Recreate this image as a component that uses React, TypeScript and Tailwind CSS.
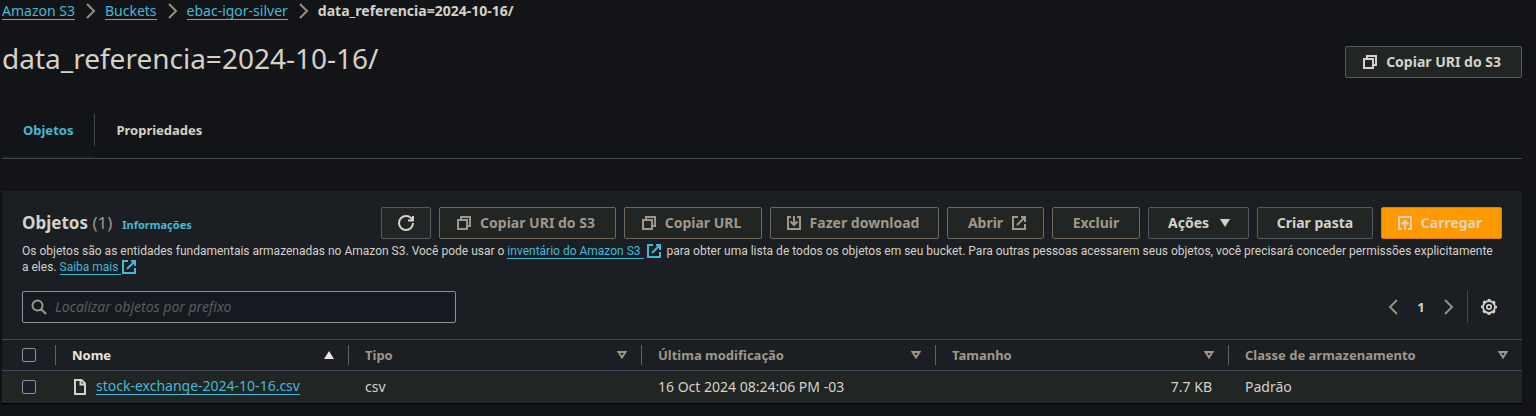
import React from "react";

type IconProps = { className?: string };

function Stroke({ d, className = "" }: { d: string; className?: string }) {
  return (
    <svg viewBox="0 0 16 16" aria-hidden="true" className={`size-4 shrink-0 fill-none stroke-current stroke-2 ${className}`}>
      <path d={d} />
    </svg>
  );
}

const CopyIcon = (p: IconProps) => <Stroke {...p} d="M2 5h9v9H2zM5 5V2h9v9h-3" />;
const DownloadIcon = (p: IconProps) => <Stroke {...p} d="M5 2H2v12h12V2h-3M8 1v9M4.500 6.500L8 10l3.500-3.500" />;
const UploadIcon = (p: IconProps) => <Stroke {...p} d="M5 14H2V2h12v12h-3M8 15V6M4.500 9.500L8 6l3.500 3.500" />;
const ExternalIcon = (p: IconProps) => <Stroke {...p} d="M10 2h4v5M6 10l8-8M14 9v5H2V2h5" />;
const RefreshIcon = (p: IconProps) => <Stroke {...p} d="M15 8c0 3.900-3.100 7-7 7s-7-3.100-7-7 3.100-7 7-7c2.800 0 5.300 1.700 6.400 4M10 5.500h5V1" />;
const SearchIcon = (p: IconProps) => <Stroke {...p} d="M11.500 6.500a5 5 0 1 1-10 0 5 5 0 0 1 10 0zM10 10l5 5" />;
const FileIcon = (p: IconProps) => <Stroke {...p} d="M3 1h6.500L13 4.500V15H3zM8.500 1v4.500H13" />;
const Chevron = (p: IconProps) => <Stroke {...p} d="M5 1l7 7-7 7" />;

function GearIcon() {
  return (
    <svg viewBox="0 0 16 16" aria-hidden="true" className="block size-4 fill-none stroke-current">
      <circle cx="8" cy="8" r="6" strokeWidth="1.800" />
      <circle cx="8" cy="8" r="7.200" strokeDasharray="2.827 2.827" strokeDashoffset="1.413" strokeWidth="1.600" />
      <circle cx="8" cy="8" r="2.200" strokeWidth="1.700" />
    </svg>
  );
}

function Caret({ dir, hollow }: { dir: "up" | "down"; hollow?: boolean }) {
  const d = dir === "up" ? "M8 4l5 8H3z" : hollow ? "M4.500 5h7L8 10.500z" : "M3 4h10l-5 8z";
  return (
    <svg viewBox="0 0 16 16" aria-hidden="true" className={`size-4 shrink-0 ${hollow ? "fill-none stroke-current stroke-2" : "fill-current"}`}>
      <path d={d} />
    </svg>
  );
}

type ButtonProps = { children: React.ReactNode; tone?: "normal" | "muted" | "primary"; label?: string; className?: string };

function Button({ children, tone = "normal", label, className = "" }: ButtonProps) {
  const tones = {
    normal: "border-[#545b64] bg-[#212524] text-[#d5d1c9]",
    muted: "border-[#6f675b] bg-[#212524] text-[#a0978a]",
    primary: "border-[#d98200] bg-[#ff9900] text-[#e0d3bd]",
  };
  return (
    <button
      type="button"
      aria-label={label}
      className={`flex h-8 shrink-0 items-center justify-center gap-2 rounded-xs border text-sm font-bold whitespace-nowrap ${tones[tone]} ${className}`}
    >
      {children}
    </button>
  );
}

const link = "border-b border-[#44b9d6] text-[#44b9d6]";

const columns = [
  { name: "Tipo", width: "w-[293px]" },
  { name: "Última modificação", width: "w-[294px]" },
  { name: "Tamanho", width: "w-[293px]" },
  { name: "Classe de armazenamento", width: "" },
];

function Crumb({ children }: { children: string }) {
  return (
    <li className="flex items-center gap-[7px]">
      <a href="#" className={`leading-4 ${link}`}>{children}</a>
      <Chevron className="text-[#968e81]" />
    </li>
  );
}

function Checkbox({ label }: { label: string }) {
  return (
    <input
      type="checkbox"
      aria-label={label}
      className="block size-3.5 appearance-none rounded-xs border border-[#879596] bg-[#1a202b] checked:bg-[#44b9d6]"
    />
  );
}

export default function App() {
  return (
    <div className="min-h-screen bg-[#131418] pr-3.5 pl-0.5 font-['Noto_Sans',sans-serif] text-sm text-[#d5d1c9]">
      <nav aria-label="Trilha">
        <ol className="flex h-[22px] items-center gap-[7px]">
          <Crumb>Amazon S3</Crumb>
          <Crumb>Buckets</Crumb>
          <Crumb>ebac-igor-silver</Crumb>
          <li className="font-bold">data_referencia=2024-10-16/</li>
        </ol>
      </nav>

      <header className="flex items-start justify-between pt-6">
        <h1 className="text-[28px] leading-6">data_referencia=2024-10-16/</h1>
        <Button className="pr-5 pl-4"><CopyIcon />Copiar URI do S3</Button>
      </header>

      <div role="tablist" className="mt-9 flex h-[45px] border-b border-[#414750] text-[13px] font-bold">
        <button type="button" role="tab" aria-selected="true" className="flex items-start border-b-2 border-[#1b1e22] px-[21px] text-[#44b9d6]">
          <span className="flex h-8 items-center">Objetos</span>
        </button>
        <button type="button" role="tab" aria-selected="false" className="flex items-start">
          <span className="flex h-8 items-center border-l border-[#414750] px-[21px]">Propriedades</span>
        </button>
      </div>

      <section className="mt-8 bg-[#1b1e22] shadow-[0_1px_1px_#000]">
        <div className="px-5 pt-4">
          <div className="flex items-center justify-between">
            <div className="flex items-baseline gap-2.5">
              <h2 className="text-[17px] leading-6 font-bold">Objetos <span className="font-normal text-[#a0978a]">(1)</span></h2>
              <a href="#" className="text-[11px] font-bold text-[#44b9d6]">Informações</a>
            </div>
            <div className="flex gap-2">
              <Button label="Atualizar" className="w-[50px]"><RefreshIcon /></Button>
              <Button tone="muted" className="w-[177px] pr-1"><CopyIcon />Copiar URI do S3</Button>
              <Button tone="muted" className="w-[138px] pr-1"><CopyIcon />Copiar URL</Button>
              <Button tone="muted" className="w-[169px] pr-1"><DownloadIcon />Fazer download</Button>
              <Button tone="muted" className="w-[97px] pl-1">Abrir<ExternalIcon /></Button>
              <Button tone="muted" className="w-[88px]">Excluir</Button>
              <Button className="w-[101px] pl-1">Ações<Caret dir="down" /></Button>
              <Button className="w-[116px]">Criar pasta</Button>
              <Button tone="primary" className="w-[121px] pr-1"><UploadIcon />Carregar</Button>
            </div>
          </div>
          <p className="mt-1 font-['Roboto',sans-serif] text-xs leading-4">
            Os objetos são as entidades fundamentais armazenadas no Amazon S3. Você pode usar o{" "}
            <a href="#" className={link}>inventário do Amazon S3 </a>
            <ExternalIcon className="-my-1 mx-0.5 inline align-baseline text-[#44b9d6]" />{" "}
            para obter uma lista de todos os objetos em seu bucket. Para outras pessoas acessarem seus objetos, você precisará conceder permissões explicitamente
            <br />
            a eles.{" "}
            <a href="#" className={link}>Saiba mais </a>
            <ExternalIcon className="-my-1 inline align-baseline text-[#44b9d6]" />
          </p>
          <div className="mt-4 flex items-center justify-between pb-4">
            <label className="flex h-8 w-[434px] items-center gap-2 rounded-xs border border-[#879596] bg-[#151920] px-2 text-[#a0978a]">
              <SearchIcon />
              <input
                type="text"
                aria-label="Localizar objetos por prefixo"
                placeholder="Localizar objetos por prefixo"
                className="min-w-0 flex-1 bg-transparent italic outline-none placeholder:text-[#5d5b58]"
              />
            </label>
            <div className="flex items-center pr-[5px]">
              <button type="button" aria-label="Página anterior" className="text-[#968e81]"><Chevron className="rotate-180" /></button>
              <button type="button" className="w-[38px] text-center text-[13px] font-bold">1</button>
              <button type="button" aria-label="Próxima página" className="text-[#968e81]"><Chevron /></button>
              <div className="ml-[11px] flex h-8 items-center border-l border-[#414750] pl-[13px]">
                <button type="button" aria-label="Preferências"><GearIcon /></button>
              </div>
            </div>
          </div>
        </div>

        <table className="w-full table-fixed border-collapse text-left">
          <thead>
            <tr className="h-[31px] border-y border-[#414750] text-[13px] text-[#a0978a]">
              <th className="w-[53px] pl-5"><Checkbox label="Selecionar tudo" /></th>
              <th className="w-[293px] p-0 text-[#eae6de]">
                <div className="flex h-5 items-center justify-between border-l border-[#5f6266] pr-[11px] pl-4">Nome<Caret dir="up" /></div>
              </th>
              {columns.map((c) => (
                <th key={c.name} className={`p-0 ${c.width}`}>
                  <div className="flex h-5 items-center justify-between border-l border-[#5f6266] pr-[11px] pl-4">{c.name}<Caret dir="down" hollow /></div>
                </th>
              ))}
            </tr>
          </thead>
          <tbody>
            <tr className="h-8 bg-[#212524]">
              <td className="pl-5"><Checkbox label="Selecionar stock-exchange-2024-10-16.csv" /></td>
              <td className="pl-[17px]">
                <div className="flex items-center gap-2"><FileIcon /><a href="#" className={`leading-4 ${link}`}>stock-exchange-2024-10-16.csv</a></div>
              </td>
              <td className="pl-[17px]">csv</td>
              <td className="pl-[17px]">16 Oct 2024 08:24:06 PM -03</td>
              <td className="pr-4 text-right">7.7 KB</td>
              <td className="pl-[17px]">Padrão</td>
            </tr>
          </tbody>
        </table>
      </section>
    </div>
  );
}
